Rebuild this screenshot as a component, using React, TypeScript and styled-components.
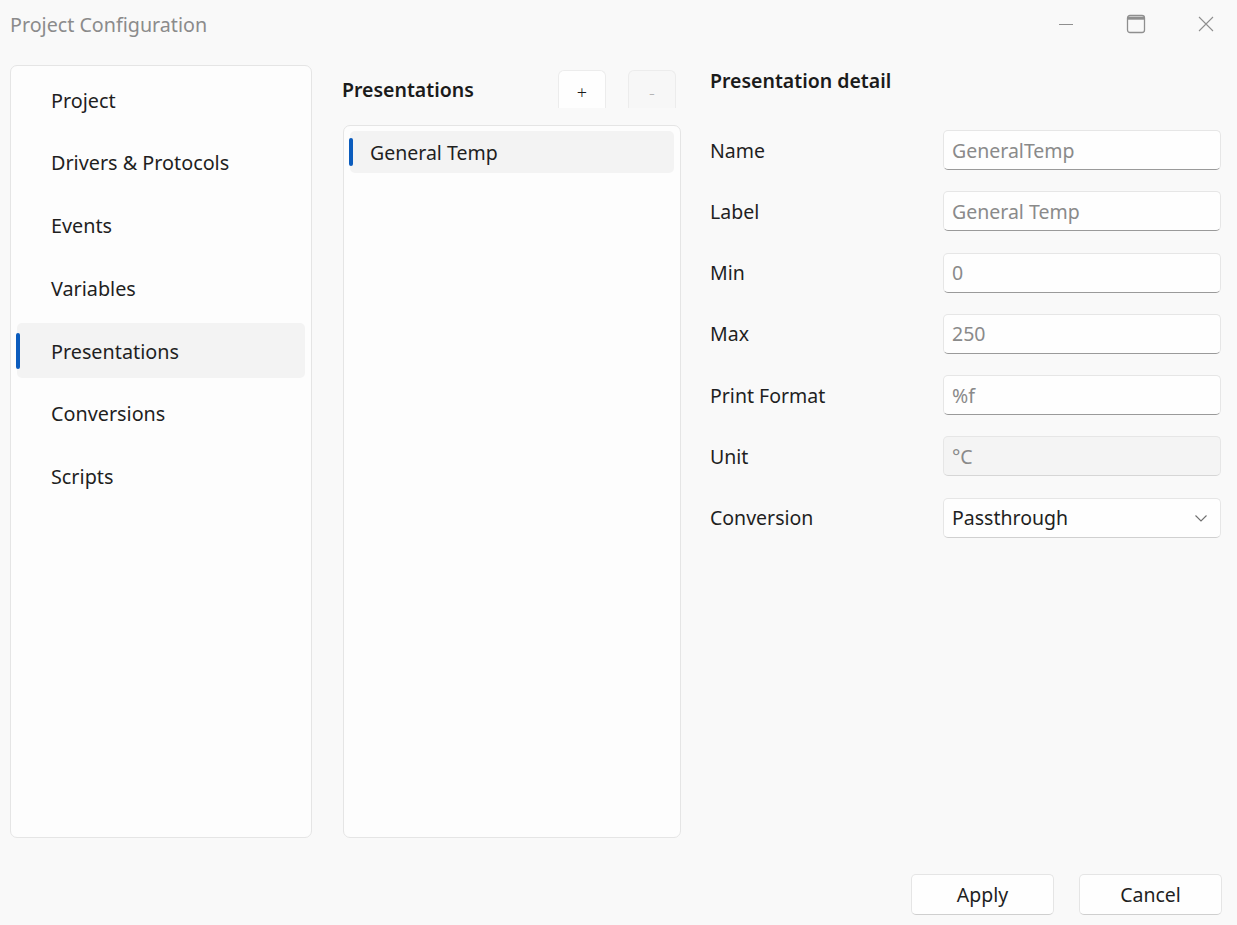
import styled, { createGlobalStyle } from "styled-components";

const GlobalStyle = createGlobalStyle`
  html, body {
    margin: 0;
    padding: 0;
    background: #f9f9f9;
    overflow: hidden;
  }
  body {
    font-family: "Segoe UI", "Noto Sans", "Open Sans", sans-serif;
    color: #1b1b1b;
  }
`;

const Window = styled.div`
  width: 1237px;
  height: 925px;
  display: flex;
  flex-direction: column;
  box-sizing: border-box;
  overflow: hidden;
`;

const TitleBar = styled.div`
  height: 48px;
  display: flex;
  align-items: center;
  justify-content: space-between;
  padding-left: 10px;
`;

const Title = styled.span`
  font-size: 19.7px;
  color: #8b8b8b;
`;

const Controls = styled.div`
  display: flex;
  height: 100%;
  margin-right: -4px;
`;

const ControlButton = styled.div`
  width: 70px;
  height: 100%;
  display: flex;
  align-items: center;
  justify-content: center;
  color: #8f8f8f;
`;

const Body = styled.div`
  flex: 1;
  display: grid;
  grid-template-columns: 302px 339px 1fr;
  column-gap: 30px;
  padding: 17px 16px 0 10px;
  min-height: 0;

  & > :last-child {
    margin-left: -1px;
  }
`;

const Card = styled.div`
  background: #fdfdfd;
  border: 1px solid #e5e5e5;
  border-radius: 7px;
  box-sizing: border-box;
`;

const NavCard = styled(Card)`
  height: 773px;
  padding: 6px 6px;
  display: flex;
  flex-direction: column;
  gap: 7.8px;
`;

const NavItem = styled.div<{ $active?: boolean }>`
  position: relative;
  height: 55px;
  flex-shrink: 0;
  display: flex;
  align-items: center;
  padding-left: 34px;
  padding-top: 1px;
  box-sizing: border-box;
  font-size: 19.8px;
  border-radius: 5px;
  background: ${(p) => (p.$active ? "#f3f3f3" : "transparent")};
  color: #1f1f1f;
`;

const Indicator = styled.span<{ $h: number }>`
  position: absolute;
  left: -1px;
  top: 50%;
  width: 4px;
  height: ${(p) => p.$h}px;
  transform: translateY(-50%);
  border-radius: 2px;
  background: #0b5cbd;
`;

const MiddleColumn = styled.div`
  display: flex;
  flex-direction: column;
`;

const ListHeader = styled.div`
  height: 60px;
  display: flex;
  align-items: flex-start;
  padding-top: 5px;
  box-sizing: border-box;
`;

const SectionTitle = styled.h2`
  margin: 0;
  font-size: 19.5px;
  font-weight: 600;
  color: #1b1b1b;
`;

const ListTitle = styled(SectionTitle)`
  margin-top: 6px;
  flex: 1;
`;

const ButtonGroup = styled.div`
  display: flex;
  gap: 22px;
  margin-right: 5px;
`;

const SmallButton = styled.button<{ $disabled?: boolean }>`
  width: 48px;
  height: 38px;
  border: 1px solid #ececec;
  border-bottom: none;
  border-radius: 6px 6px 0 0;
  background: ${(p) => (p.$disabled ? "#f7f7f7" : "#fefefe")};
  color: ${(p) => (p.$disabled ? "#b5b5b5" : "#1b1b1b")};
  font-family: inherit;
  font-size: 18px;
  font-weight: 300;
  padding: 4px 0 0;
`;

const ListCard = styled(Card)`
  margin-left: 1px;
  height: 713px;
  padding: 5px 6px;
`;

const ListItem = styled.div`
  position: relative;
  height: 42px;
  display: flex;
  align-items: center;
  padding-left: 20px;
  border-radius: 5px;
  background: #f3f3f3;
  font-size: 19.5px;
  color: #1f1f1f;
`;

const DetailColumn = styled.div``;

const DetailHeader = styled.div`
  height: 30px;
  display: flex;
  align-items: center;
  margin-bottom: 35px;
`;

const Form = styled.div`
  display: grid;
  grid-template-columns: 233px 1fr;
  row-gap: 21.3px;
`;

const FieldLabel = styled.label`
  display: flex;
  align-items: center;
  font-size: 19.5px;
  color: #1f1f1f;
`;

const Field = styled.div<{ $disabled?: boolean }>`
  height: 40px;
  box-sizing: border-box;
  display: flex;
  align-items: center;
  justify-content: space-between;
  padding: 0 12px 0 8px;
  border: 1px solid #e6e6e6;
  border-radius: 5px;
  background: ${(p) => (p.$disabled ? "#f4f4f4" : "#fefefe")};
  border-bottom-color: ${(p) => (p.$disabled ? "#d6d6d6" : "#9a9a9a")};
  font-size: 19.5px;
  color: #8a8a8a;
`;

const SelectField = styled(Field)`
  color: #1f1f1f;
  border-bottom-color: #d0d0d0;
`;

const Footer = styled.div`
  height: 88px;
  display: flex;
  justify-content: flex-end;
  align-items: flex-start;
  gap: 25px;
  padding: 37px 15px 0 0;
  box-sizing: border-box;
`;

const DialogButton = styled.button`
  width: 143px;
  height: 41px;
  border: 1px solid #e5e5e5;
  border-bottom-color: #cfcfcf;
  border-radius: 5px;
  background: #fefefe;
  font-family: inherit;
  font-size: 19.5px;
  color: #1f1f1f;
`;

const navItems = [
  "Project",
  "Drivers & Protocols",
  "Events",
  "Variables",
  "Presentations",
  "Conversions",
  "Scripts",
];

const fields = [
  { label: "Name", value: "GeneralTemp" },
  { label: "Label", value: "General Temp" },
  { label: "Min", value: "0" },
  { label: "Max", value: "250" },
  { label: "Print Format", value: "%f" },
  { label: "Unit", value: "°C", disabled: true },
];

export default function App() {
  return (
    <>
      <GlobalStyle />
      <Window>
        <TitleBar>
          <Title>Project Configuration</Title>
          <Controls>
            <ControlButton>
              <svg width="16" height="16" viewBox="0 0 16 16">
                <path d="M1 8.5h14" stroke="currentColor" strokeWidth="1" />
              </svg>
            </ControlButton>
            <ControlButton>
              <svg width="20" height="20" viewBox="0 0 20 20">
                <rect x="1.5" y="1.5" width="17" height="17" rx="2.5" fill="none" stroke="currentColor" strokeWidth="1.3" />
                <path d="M2 4.2h16" stroke="currentColor" strokeWidth="3" />
              </svg>
            </ControlButton>
            <ControlButton>
              <svg width="16" height="16" viewBox="0 0 16 16">
                <path d="M1 1l14 14M15 1L1 15" stroke="currentColor" strokeWidth="1.1" />
              </svg>
            </ControlButton>
          </Controls>
        </TitleBar>

        <Body>
          <NavCard>
            {navItems.map((item) => (
              <NavItem key={item} $active={item === "Presentations"}>
                {item === "Presentations" && <Indicator $h={36} />}
                {item}
              </NavItem>
            ))}
          </NavCard>

          <MiddleColumn>
            <ListHeader>
              <ListTitle>Presentations</ListTitle>
              <ButtonGroup>
                <SmallButton>+</SmallButton>
                <SmallButton $disabled>-</SmallButton>
              </ButtonGroup>
            </ListHeader>
            <ListCard>
              <ListItem>
                <Indicator $h={28} />
                General Temp
              </ListItem>
            </ListCard>
          </MiddleColumn>

          <DetailColumn>
            <DetailHeader>
              <SectionTitle>Presentation detail</SectionTitle>
            </DetailHeader>
            <Form>
              {fields.map((f) => [
                <FieldLabel key={f.label + "-l"}>{f.label}</FieldLabel>,
                <Field key={f.label + "-f"} $disabled={f.disabled}>
                  {f.value}
                </Field>,
              ])}
              <FieldLabel>Conversion</FieldLabel>
              <SelectField>
                Passthrough
                <svg width="14" height="14" viewBox="0 0 14 14">
                  <path d="M1.5 4.5L7 10l5.5-5.5" fill="none" stroke="#6f6f6f" strokeWidth="1.1" />
                </svg>
              </SelectField>
            </Form>
          </DetailColumn>
        </Body>

        <Footer>
          <DialogButton>Apply</DialogButton>
          <DialogButton>Cancel</DialogButton>
        </Footer>
      </Window>
    </>
  );
}
